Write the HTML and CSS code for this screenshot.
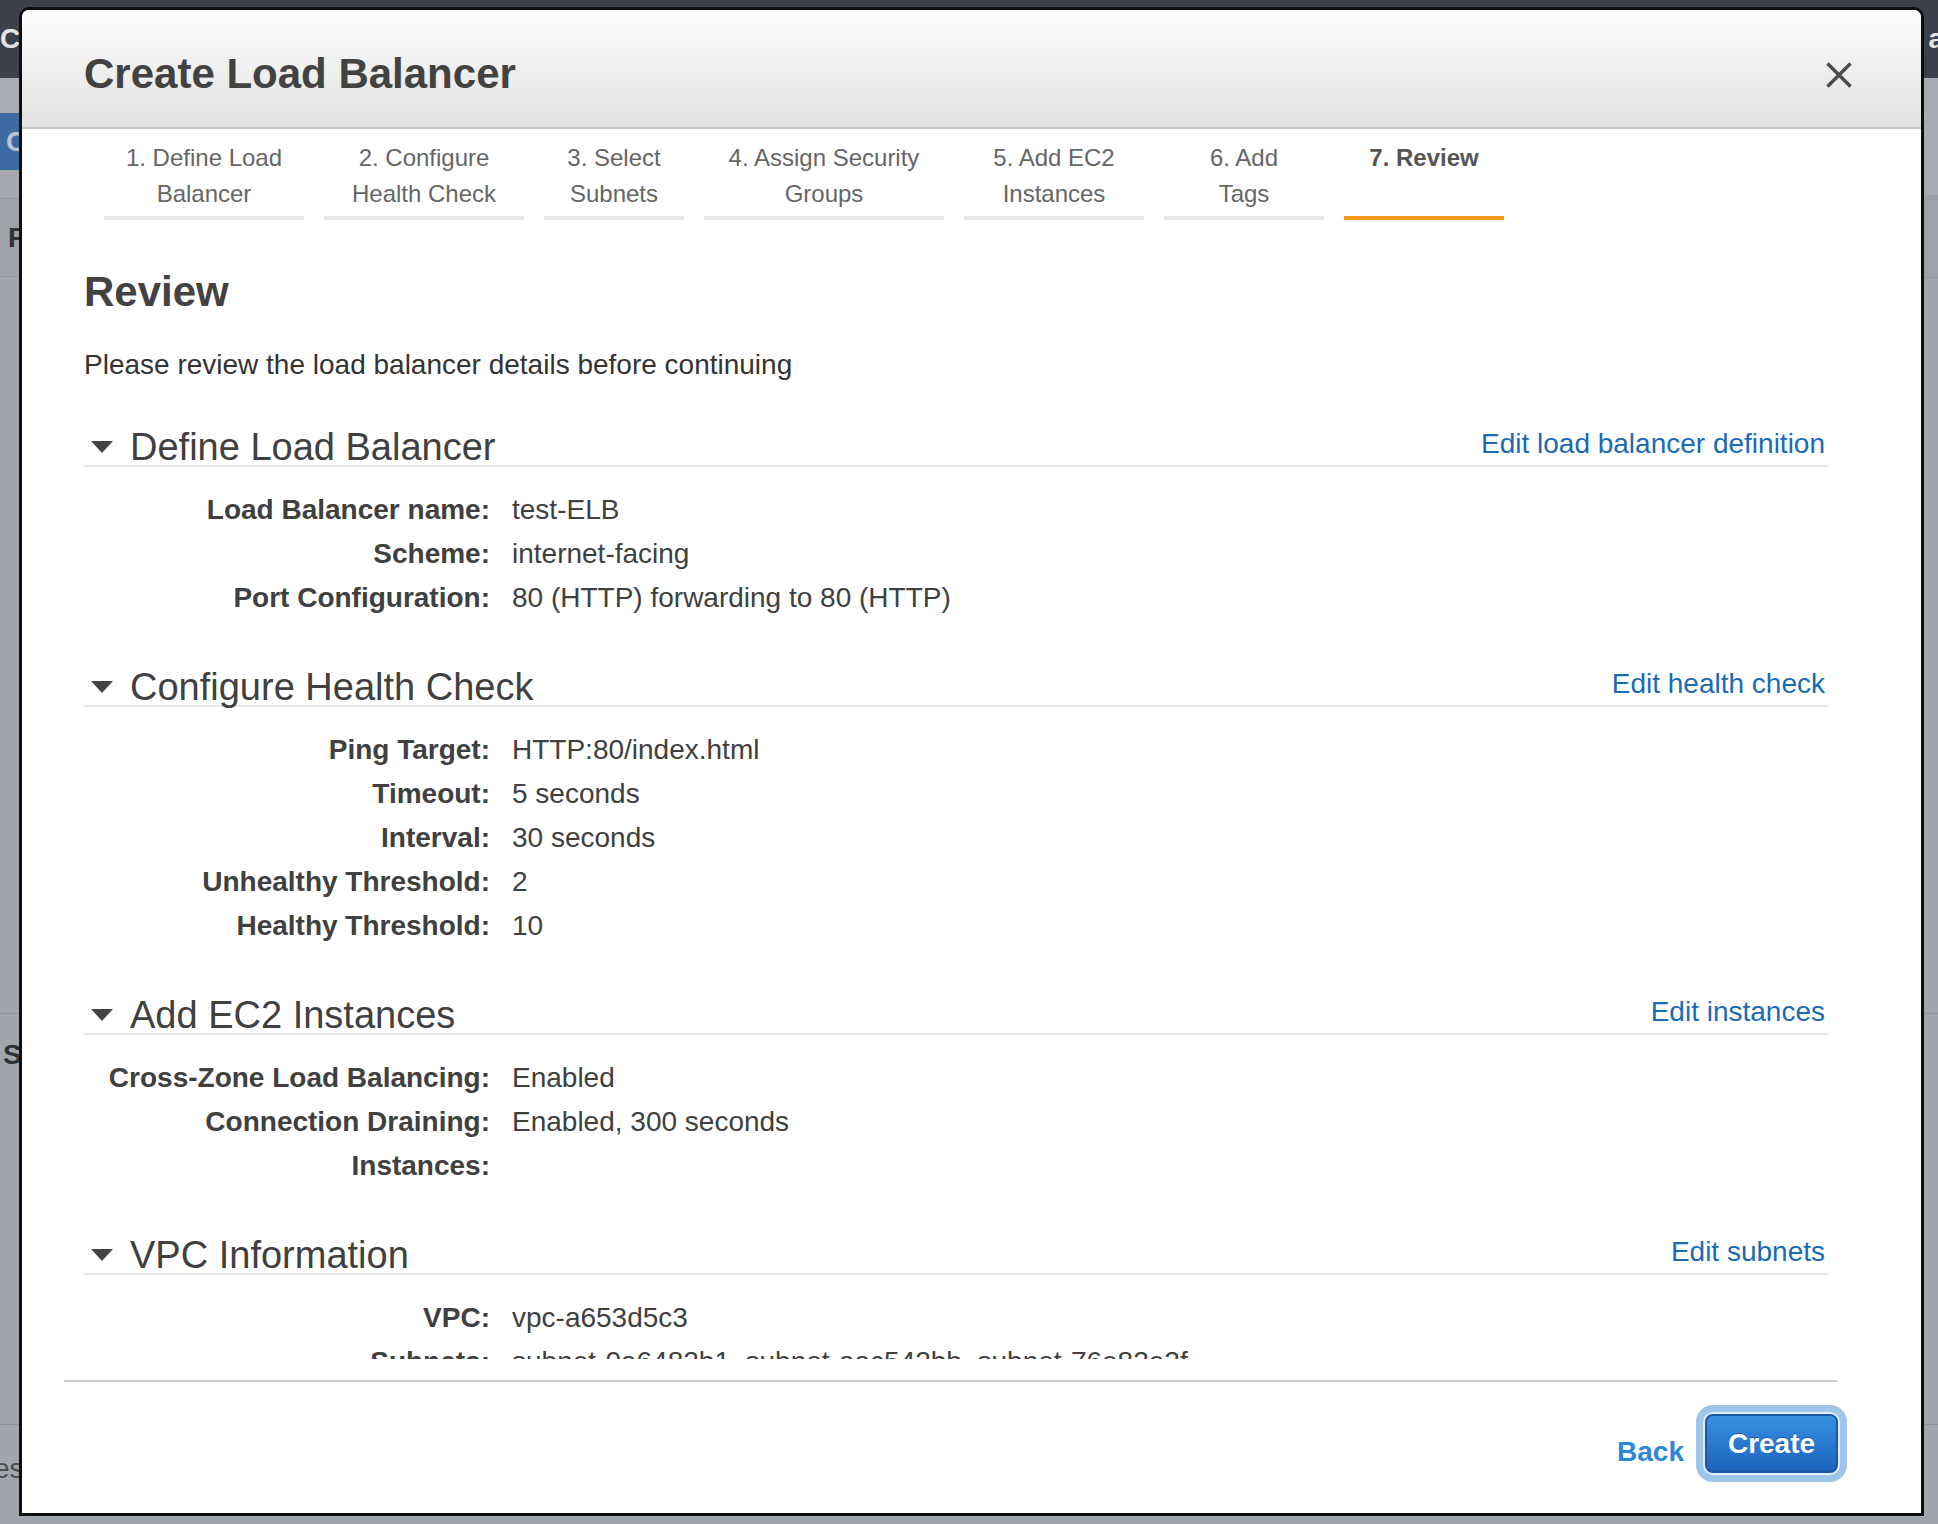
FILE: index.html
```html
<!DOCTYPE html>
<html lang="en">
<head>
<meta charset="utf-8">
<title>Create Load Balancer</title>
<link rel="stylesheet" href="styles.css">
</head>
<body>
<div class="page">
  <header class="topbar">
    <span class="topbar-brand">C</span>
    <span class="topbar-user">a</span>
  </header>
  <div class="page-main">
    <aside class="sidebar">
      <div class="side-spacer"></div>
      <div class="side-item side-item-active">C</div>
      <div class="side-spacer-sm"></div>
      <div class="side-item side-item-head">F</div>
      <div class="side-fill"></div>
      <div class="side-item side-item-section">S</div>
      <div class="side-item side-item-foot">es</div>
    </aside>
    <main class="content">
      <div class="content-band-light"></div>
      <div class="content-band-dark"></div>
      <div class="content-fill"></div>
      <div class="content-block"></div>
      <div class="content-block content-block-last"></div>
    </main>
  </div>
</div>

<div class="modal" role="dialog" aria-label="Create Load Balancer">
  <div class="modal-header">
    <h1 class="modal-title">Create Load Balancer</h1>
    <button class="modal-close" aria-label="Close">
      <svg width="28" height="28" viewBox="0 0 28 28"><path d="M2.5 2.5 L25.5 25.5 M25.5 2.5 L2.5 25.5" fill="none" stroke="#4a4a4a" stroke-width="3.4"/></svg>
    </button>
  </div>

  <div class="modal-body">
    <nav class="steps">
      <div class="step step-w200">1. Define Load<br>Balancer</div>
      <div class="step step-w200">2. Configure<br>Health Check</div>
      <div class="step step-w140">3. Select<br>Subnets</div>
      <div class="step step-w240">4. Assign Security<br>Groups</div>
      <div class="step step-w180">5. Add EC2<br>Instances</div>
      <div class="step step-w160">6. Add<br>Tags</div>
      <div class="step step-w160 step-active">7. Review</div>
    </nav>

    <h2 class="review-title">Review</h2>
    <p class="review-intro">Please review the load balancer details before continuing</p>

    <section class="section">
      <div class="section-head">
        <h3 class="section-title"><span class="caret"></span>Define Load Balancer</h3>
        <a class="section-edit" href="#">Edit load balancer definition</a>
      </div>
      <dl class="details">
        <dt>Load Balancer name:</dt><dd>test-ELB</dd>
        <dt>Scheme:</dt><dd>internet-facing</dd>
        <dt>Port Configuration:</dt><dd>80 (HTTP) forwarding to 80 (HTTP)</dd>
      </dl>
    </section>

    <section class="section">
      <div class="section-head">
        <h3 class="section-title"><span class="caret"></span>Configure Health Check</h3>
        <a class="section-edit" href="#">Edit health check</a>
      </div>
      <dl class="details">
        <dt>Ping Target:</dt><dd>HTTP:80/index.html</dd>
        <dt>Timeout:</dt><dd>5 seconds</dd>
        <dt>Interval:</dt><dd>30 seconds</dd>
        <dt>Unhealthy Threshold:</dt><dd>2</dd>
        <dt>Healthy Threshold:</dt><dd>10</dd>
      </dl>
    </section>

    <section class="section">
      <div class="section-head">
        <h3 class="section-title"><span class="caret"></span>Add EC2 Instances</h3>
        <a class="section-edit" href="#">Edit instances</a>
      </div>
      <dl class="details">
        <dt>Cross-Zone Load Balancing:</dt><dd>Enabled</dd>
        <dt>Connection Draining:</dt><dd>Enabled, 300 seconds</dd>
        <dt>Instances:</dt><dd></dd>
      </dl>
    </section>

    <section class="section">
      <div class="section-head">
        <h3 class="section-title"><span class="caret"></span>VPC Information</h3>
        <a class="section-edit" href="#">Edit subnets</a>
      </div>
      <dl class="details">
        <dt>VPC:</dt><dd>vpc-a653d5c3</dd>
        <dt>Subnets:</dt><dd>subnet-0a6482b1, subnet-aac542bb, subnet-76e82e2f</dd>
      </dl>
    </section>
  </div>

  <div class="modal-footer">
    <div class="footer-bar">
      <a class="btn-back" href="#">Back</a>
      <button class="btn-create">Create</button>
    </div>
  </div>
</div>
</body>
</html>
```

FILE: styles.css
```css
html, body {
  margin: 0;
  padding: 0;
}

body {
  width: 1938px;
  height: 1524px;
  overflow: hidden;
  position: relative;
  background: #a1a5ac;
  font-family: "Liberation Sans", Arial, Helvetica, sans-serif;
  color: #404040;
}

/* ---------- background page (behind the dialog) ---------- */
.page {
  display: flex;
  flex-direction: column;
  height: 1524px;
}

.topbar {
  flex: none;
  height: 78px;
  background: #3c4048;
  display: flex;
  justify-content: space-between;
  align-items: center;
  color: #e4e4e4;
  font-weight: bold;
  font-size: 28px;
}

.topbar-brand {
  margin-left: 0;
}

.topbar-user {
  margin-right: -6px;
}

.page-main {
  flex: 1;
  display: flex;
}

.sidebar {
  width: 300px;
  flex: none;
  display: flex;
  flex-direction: column;
  background: #a1a5ac;
}

.side-spacer {
  height: 35px;
  background: #a9adb3;
}

.side-item {
  font-weight: bold;
  font-size: 28px;
}

.side-item-active {
  height: 57px;
  line-height: 57px;
  padding-left: 6px;
  background: #3b6ba1;
  color: #b9c6d8;
}

.side-spacer-sm {
  height: 28px;
  background: #a6aab0;
}

.side-item-head {
  box-sizing: border-box;
  height: 79px;
  line-height: 77px;
  padding-left: 8px;
  border-top: 1px solid #92969d;
  border-bottom: 1px solid #92969d;
  background: #9ea2a9;
  color: #333;
}

.side-fill {
  height: 736px;
}

.side-item-section {
  box-sizing: border-box;
  height: 411px;
  padding: 27px 0 0 3px;
  line-height: 28px;
  border-top: 1px solid #8f939a;
  color: #2e3033;
}

.side-item-foot {
  padding: 30px 0 0 0;
  margin-left: -6px;
  line-height: 28px;
  font-weight: normal;
  border-top: 1px solid #8f939a;
  color: #4a4c50;
}

.content {
  flex: 1;
  display: flex;
  flex-direction: column;
}

.content-band-light {
  height: 117px;
  background: #a8abb1;
}

.content-band-dark {
  height: 82px;
  background: #9da1a8;
  border-bottom: 1px solid #92969d;
}

.content-fill {
  height: 735px;
}

.content-block {
  height: 410px;
  border-top: 1px solid #8f939a;
}

.content-block-last {
  height: auto;
  flex: 1;
}

/* ---------- dialog ---------- */
.modal {
  position: absolute;
  left: 19px;
  top: 7px;
  width: 1905px;
  height: 1509px;
  box-sizing: border-box;
  border: 3px solid #0e0e0e;
  border-radius: 10px 10px 0 0;
  background: #fff;
  display: flex;
  flex-direction: column;
  overflow: hidden;
  z-index: 10;
}

.modal-header {
  flex: none;
  box-sizing: border-box;
  height: 119px;
  padding: 43px 68px 0 62px;
  display: flex;
  justify-content: space-between;
  align-items: flex-start;
  background: linear-gradient(#fefefe, #e1e1e1);
  border-bottom: 2px solid #c9c9c9;
}

.modal-title {
  margin: 0;
  font-size: 42px;
  line-height: 42px;
  font-weight: bold;
  color: #424242;
}

.modal-close {
  margin: 8px 0 0 0;
  padding: 0;
  border: 0;
  background: none;
  width: 28px;
  height: 28px;
  display: block;
}

.modal-close svg {
  display: block;
}

.modal-body {
  flex: 1 1 auto;
  min-height: 0;
  overflow: hidden;
  padding: 11px 93px 0 62px;
}

/* steps */
.steps {
  display: flex;
  gap: 20px;
  margin-left: 20px;
}

.step {
  box-sizing: border-box;
  text-align: center;
  font-size: 24px;
  line-height: 36px;
  color: #666;
  padding-bottom: 4px;
  border-bottom: 4px solid #ebebeb;
}

.step-w140 { width: 140px; }
.step-w160 { width: 160px; }
.step-w180 { width: 180px; }
.step-w200 { width: 200px; }
.step-w240 { width: 240px; }

.step-active {
  font-weight: bold;
  color: #555;
  border-bottom-color: #f8991d;
}

/* review heading */
.review-title {
  margin: 51px 0 0 0;
  font-size: 42px;
  line-height: 42px;
  font-weight: bold;
  color: #424242;
}

.review-intro {
  margin: 30px 0 0 0;
  font-size: 28px;
  line-height: 44px;
  color: #333;
}

/* sections */
.section {
  margin-top: 48px;
}

.section:first-of-type {
  margin-top: 41px;
}

.section-head {
  display: flex;
  justify-content: space-between;
  align-items: flex-end;
  padding-right: 3px;
  border-bottom: 2px solid #e9e9e9;
}

.section-title {
  margin: 0;
  display: flex;
  align-items: center;
  font-size: 38px;
  line-height: 36px;
  font-weight: normal;
  color: #404040;
}

.caret {
  width: 0;
  height: 0;
  border-left: 11px solid transparent;
  border-right: 11px solid transparent;
  border-top: 12px solid #444;
  margin: 0 17px 0 7px;
}

.section-edit {
  font-size: 28px;
  line-height: 32px;
  margin-bottom: 5px;
  color: #1a6bb5;
  text-decoration: none;
}

.details {
  display: grid;
  grid-template-columns: 406px 1fr;
  column-gap: 22px;
  margin: 21px 0 0 0;
  font-size: 28px;
  line-height: 44px;
}

.details dt {
  font-weight: bold;
  text-align: right;
  color: #404040;
}

.details dd {
  margin: 0;
  color: #404040;
  white-space: nowrap;
}

/* footer */
.modal-footer {
  flex: none;
  box-sizing: border-box;
  height: 154px;
  padding: 21px 83px 0 42px;
}

.footer-bar {
  border-top: 2px solid #cfcfcf;
  padding-top: 32px;
  display: flex;
  justify-content: flex-end;
  align-items: flex-end;
  gap: 21px;
}

.btn-back {
  font-size: 28px;
  line-height: 28px;
  font-weight: bold;
  color: #2b86dc;
  text-decoration: none;
  margin-bottom: 7px;
}

.btn-create {
  box-sizing: border-box;
  width: 133px;
  height: 59px;
  padding: 0;
  border: 2px solid #1c58a3;
  border-radius: 8px;
  background: linear-gradient(#3990e3, #1a63bd);
  color: #fff;
  font-family: "Liberation Sans", Arial, Helvetica, sans-serif;
  font-size: 28px;
  font-weight: bold;
  line-height: 55px;
  text-shadow: 0 -1px 0 rgba(0, 40, 100, 0.45);
  box-shadow: 0 0 0 2px #e2edf9, 0 0 0 9px #9fc5eb;
}
```
